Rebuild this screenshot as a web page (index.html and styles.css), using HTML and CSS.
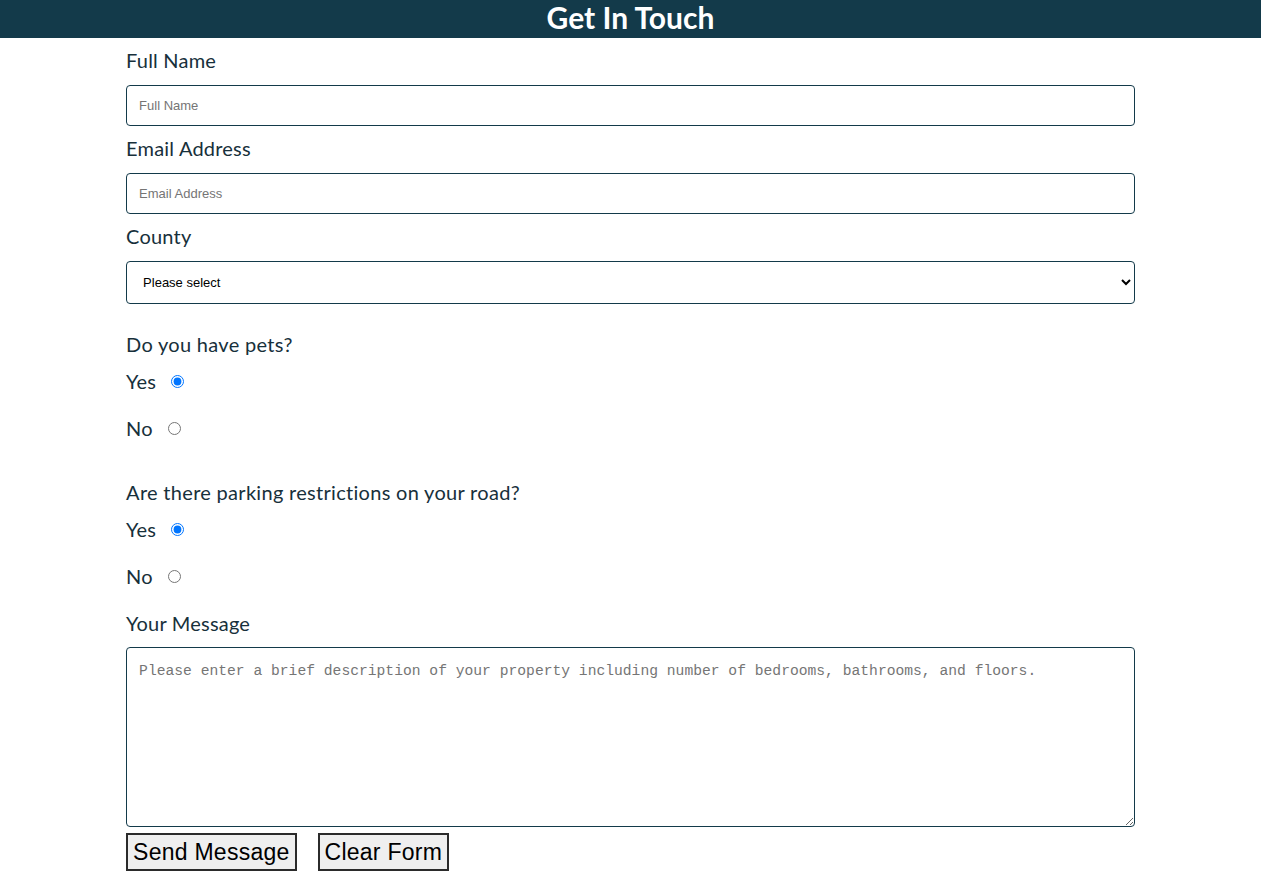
FILE: index.html
```html
<!DOCTYPE html>
<html lang="en">
<head>
<meta charset="utf-8">
<title>Get In Touch</title>
<link rel="stylesheet" href="styles.css">
</head>
<body>
<header class="topbar">
  <h1 class="title">Get In Touch</h1>
</header>
<form class="contact">
  <label class="field-label" for="fullname">Full Name</label>
  <input class="text-input" id="fullname" type="text" placeholder="Full Name">

  <label class="field-label" for="email">Email Address</label>
  <input class="text-input" id="email" type="email" placeholder="Email Address">

  <label class="field-label" for="county">County</label>
  <select class="select-input" id="county">
    <option>Please select</option>
  </select>

  <fieldset class="group">
    <p class="question">Do you have pets?</p>
    <div class="radio-row"><label for="pets-yes">Yes</label><input class="radio" type="radio" id="pets-yes" name="pets" checked></div>
    <div class="radio-row"><label for="pets-no">No</label><input class="radio" type="radio" id="pets-no" name="pets"></div>
  </fieldset>

  <fieldset class="group group-second">
    <p class="question">Are there parking restrictions on your road?</p>
    <div class="radio-row"><label for="park-yes">Yes</label><input class="radio" type="radio" id="park-yes" name="park" checked></div>
    <div class="radio-row"><label for="park-no">No</label><input class="radio" type="radio" id="park-no" name="park"></div>
  </fieldset>

  <label class="field-label msg-label" for="message">Your Message</label>
  <textarea class="message" id="message" placeholder="Please enter a brief description of your property including number of bedrooms, bathrooms, and floors."></textarea>

  <div class="buttons">
    <button type="submit" class="btn">Send Message</button>
    <button type="reset" class="btn">Clear Form</button>
  </div>
</form>
</body>
</html>
```

FILE: styles.css
```css
html, body {
  margin: 0;
  padding: 0;
  background: #ffffff;
}

body {
  font-family: "Lato", "Open Sans", sans-serif;
  color: #17303b;
}

.topbar {
  background: #133a4a;
  height: 38px;
  display: flex;
  justify-content: center;
  align-items: flex-start;
}

.title {
  margin: 0;
  color: #ffffff;
  font-size: 30px;
  font-weight: 700;
  line-height: 34px;
}

.contact {
  width: 80%;
  margin: 0 auto;
  display: flex;
  flex-direction: column;
}

.field-label {
  display: block;
  font-size: 20px;
  line-height: 24px;
  letter-spacing: 0.2px;
  margin: 10px 0 13px;
}

.text-input {
  box-sizing: border-box;
  width: 100%;
  height: 41px;
  border: 1px solid #133a4a;
  border-radius: 4px;
  padding: 0 12px;
  font-family: "Liberation Sans", Arial, sans-serif;
  font-size: 13px;
  color: #000;
  outline: none;
}

.text-input::placeholder {
  color: #757575;
}

.select-input {
  box-sizing: border-box;
  width: 100%;
  height: 43px;
  border: 1px solid #133a4a;
  border-radius: 4px;
  padding: 0 12px;
  font-family: "Liberation Sans", Arial, sans-serif;
  font-size: 13px;
  color: #000;
  background: #fff;
}

.group {
  border: 0;
  margin: 0;
  padding: 0;
}

.question {
  font-size: 20px;
  line-height: 24px;
  letter-spacing: 0.3px;
  margin: 28px 0 0;
}

.radio-row {
  display: flex;
  align-items: center;
  font-size: 20px;
  line-height: 24px;
  letter-spacing: 0.2px;
  margin-top: 13px;
  height: 24px;
}

.radio-row + .radio-row {
  margin-top: 23px;
}

.radio {
  margin: 0 0 0 15px;
  width: 13px;
  height: 13px;
}

.group-second .question {
  margin-top: 40px;
}

.contact .msg-label {
  margin: 23px 0 12px;
}

.message {
  box-sizing: border-box;
  width: 100%;
  height: 180px;
  border: 1px solid #133a4a;
  border-radius: 4px;
  padding: 15px 12px;
  font-family: "Liberation Mono", monospace;
  font-size: 14.67px;
  color: #000;
}

.message::placeholder {
  color: #757575;
}

.buttons {
  display: flex;
  gap: 21px;
  margin-top: 6px;
}

.btn {
  font-family: "Liberation Sans", Arial, sans-serif;
  font-size: 23px;
  letter-spacing: 0.25px;
  line-height: 26px;
  padding: 4px 5px;
  border: 2px solid #2b2b2b;
  background: #efefef;
  color: #000;
  border-radius: 0;
}
```
